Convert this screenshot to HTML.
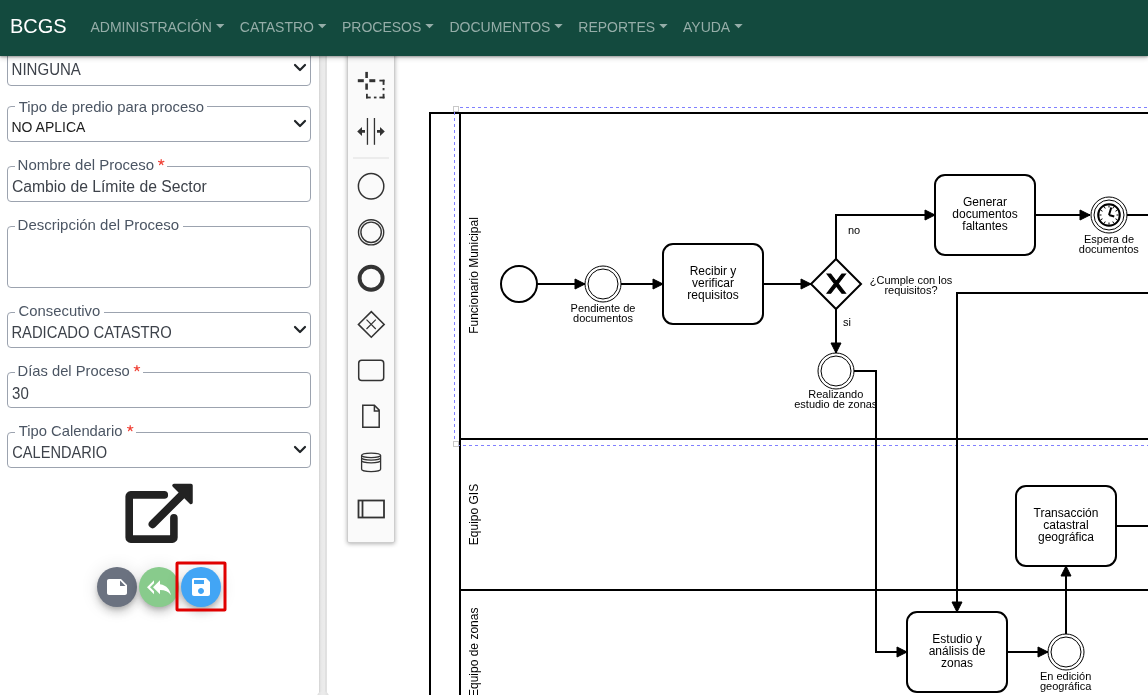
<!DOCTYPE html>
<html><head><meta charset="utf-8">
<style>
html,body{margin:0;padding:0}
body{width:1148px;height:695px;overflow:hidden;position:relative;background:#fff;font-family:"Liberation Sans",sans-serif}
.abs{position:absolute}
#nav{left:0;top:0;width:1148px;height:56px;background:#134a3e;box-shadow:0 1px 2px rgba(0,0,0,.3),0 2px 5px rgba(0,0,0,.2);z-index:10}
#splitter{left:319px;top:56px;width:8px;height:639px;background:linear-gradient(to right,#d2d2d2 0,#e3e3e3 1.5px,#eaeaea 3px,#ebebeb 5.5px,#dadada 7px,#e8e8e8 8px)}
#splitfoot{left:317px;top:691px;width:12px;height:10px;border-radius:6px 6px 0 0;background:linear-gradient(to right,#dcdcdc,#ebebeb 40%,#ebebeb 60%,#dcdcdc)}
#palette{left:347px;top:30px;width:48px;height:513px;background:#fafafa;border:1px solid #cdcdcd;border-radius:2px;box-sizing:border-box;box-shadow:0 1px 4px rgba(0,0,0,.3)}
.fld{position:absolute;left:7px;width:304px;height:36px;border:1px solid #9ca3af;border-radius:4px;box-sizing:border-box}
.lbl{position:absolute;left:15px;height:14px;background:#fff}
.btn{position:absolute;width:40px;height:40px;border-radius:50%;box-shadow:0 3px 5px -1px rgba(0,0,0,.2),0 6px 10px 0 rgba(0,0,0,.14),0 1px 18px 0 rgba(0,0,0,.12)}
svg{position:absolute;left:0;top:0;will-change:transform}
</style></head>
<body>
<!-- left form -->
<div class="fld" style="top:50px"></div>
<div class="fld" style="top:106px"></div>
<div class="fld" style="top:166px"></div>
<div class="fld" style="top:226px;height:62px"></div>
<div class="fld" style="top:312px"></div>
<div class="fld" style="top:372px"></div>
<div class="fld" style="top:432px"></div>
<div class="lbl" style="top:99px;width:192px"></div>
<div class="lbl" style="top:159px;width:152px"></div>
<div class="lbl" style="top:219px;width:168px"></div>
<div class="lbl" style="top:305px;width:89px"></div>
<div class="lbl" style="top:365px;width:128px"></div>
<div class="lbl" style="top:425px;width:121px"></div>

<div id="splitter" class="abs"></div><div id="splitfoot" class="abs"></div>
<svg width="1148" height="695" viewBox="0 0 1148 695" font-family="Liberation Sans, sans-serif">
 <defs>
  <marker id="arr" viewBox="0 0 20 20" refX="11" refY="10" markerWidth="10" markerHeight="10" orient="auto">
   <path d="M 1 5 L 11 10 L 1 15 Z" fill="#000" stroke="#000" stroke-width="1"/>
  </marker>
 </defs>
 <!-- pool & lanes -->
 <g fill="none" stroke="#000" stroke-width="2">
  <path d="M430 760 V113 H1160"/>
  <path d="M460 113 V760"/>
  <path d="M460 439 H1160"/>
  <path d="M460 590 H1160"/>
 </g>
 <g font-size="12" fill="#000">
  <text transform="translate(478 275.5) rotate(-90)" text-anchor="middle">Funcionario Municipal</text>
  <text transform="translate(478 514.5) rotate(-90)" text-anchor="middle">Equipo GIS</text>
  <text transform="translate(478 652.3) rotate(-90)" text-anchor="middle">Equipo de zonas</text>
 </g>
 <!-- selection outline -->
 <g fill="none" stroke="#8080ff" stroke-width="1" stroke-dasharray="3 3">
  <path d="M454.5 107.5 V441" stroke-dashoffset="1.5"/>
  <path d="M454.5 107.5 H1160" stroke-dashoffset="0.5"/>
  <path d="M454.5 445.5 H1160" stroke-dashoffset="3.5"/>
 </g>
 <g fill="#fff" stroke="#c8c8c8" stroke-width="1">
  <rect x="453.5" y="106.5" width="5" height="5"/>
  <rect x="453.5" y="441.5" width="5" height="5"/>
 </g>
 <!-- flows -->
 <g fill="none" stroke="#000" stroke-width="2" marker-end="url(#arr)">
  <path d="M537 284 H585"/>
  <path d="M621 284 H663"/>
  <path d="M763 284 H811"/>
  <path d="M836 259 V215 H935"/>
  <path d="M836 309 V353"/>
  <path d="M1035 215 H1090"/>
  <path d="M854 371 H876 V652 H907"/>
  <path d="M1160 293 H957 V612"/>
  <path d="M1007 652 H1048"/>
  <path d="M1066 634 V566"/>
 </g>
 <g fill="none" stroke="#000" stroke-width="2">
  <path d="M1126 215 H1160"/>
  <path d="M1116 526 H1160"/>
 </g>
 <!-- events -->
 <g fill="#fff" stroke="#000">
  <circle cx="519" cy="284" r="18" stroke-width="2"/>
  <circle cx="603" cy="284" r="18" stroke-width="1"/>
  <circle cx="603" cy="284" r="15" stroke-width="1"/>
  <circle cx="836" cy="371" r="18" stroke-width="1"/>
  <circle cx="836" cy="371" r="15" stroke-width="1"/>
  <circle cx="1066" cy="652" r="18" stroke-width="1"/>
  <circle cx="1066" cy="652" r="15" stroke-width="1"/>
  <circle cx="1109" cy="215" r="18" stroke-width="1"/>
  <circle cx="1109" cy="215" r="15" stroke-width="1"/>
  <circle cx="1109" cy="215" r="10.8" stroke-width="2"/>
 </g>
 <g stroke="#000" fill="none">
  <path d="M1109.00 222.50 L1109.00 224.75 M1105.25 221.50 L1104.12 223.44 M1102.50 218.75 L1100.56 219.88 M1101.50 215.00 L1099.25 215.00 M1102.50 211.25 L1100.56 210.12 M1105.25 208.50 L1104.12 206.56 M1109.00 207.50 L1109.00 205.25 M1112.75 208.50 L1113.88 206.56 M1115.50 211.25 L1117.44 210.12 M1116.50 215.00 L1118.75 215.00 M1115.50 218.75 L1117.44 219.88 M1112.75 221.50 L1113.88 223.44 " stroke-width="1"/>
  <path d="M1109 215 l2.25 -7.5 m-2.25 7.5 l5.25 1.5" stroke-width="2"/>
 </g>
 <!-- gateway -->
 <path d="M836 259 L861 284 L836 309 L811 284 Z" fill="#fff" stroke="#000" stroke-width="2"/>
 <path d="m 827,274 7.42857142,9.14285714 -7.42857142,9.14285714 3.71428571,0 5.57142856,-6.85714284 5.57142856,6.85714284 3.71428571,0 -7.42857142,-9.14285714 7.42857142,-9.14285714 -3.71428571,0 -5.57142856,6.85714284 -5.57142856,-6.85714284 z" fill="#000" stroke="#000" stroke-width="1" transform="translate(0 274) scale(1 1.055) translate(0 -274)"/>
 <!-- tasks -->
 <g fill="#fff" stroke="#000" stroke-width="2">
  <rect x="663" y="244" width="100" height="80" rx="10"/>
  <rect x="935" y="175" width="100" height="80" rx="10"/>
  <rect x="1016" y="486" width="100" height="80" rx="10"/>
  <rect x="907" y="612" width="100" height="80" rx="10"/>
 </g>
 <g font-size="12" fill="#000" text-anchor="middle">
  <text x="713" y="274.8">Recibir y</text>
  <text x="713" y="286.7">verificar</text>
  <text x="713" y="298.7">requisitos</text>
  <text x="985" y="205.7">Generar</text>
  <text x="985" y="217.6">documentos</text>
  <text x="985" y="229.5">faltantes</text>
  <text x="1066" y="516.7">Transacción</text>
  <text x="1066" y="528.6">catastral</text>
  <text x="1066" y="541.4">geográfica</text>
  <text x="957" y="643.3">Estudio y</text>
  <text x="957" y="654.8">análisis de</text>
  <text x="957" y="666.9">zonas</text>
 </g>
 <g font-size="11" fill="#000" text-anchor="middle">
  <text x="603" y="311.6">Pendiente de</text>
  <text x="603" y="321.7">documentos</text>
  <text x="1109" y="242.5">Espera de</text>
  <text x="1108.8" y="253.1">documentos</text>
  <text x="835.8" y="397.6">Realizando</text>
  <text x="835.8" y="407.7">estudio de zonas</text>
  <text x="1065.6" y="680.2">En edición</text>
  <text x="1065.6" y="690.3">geográfica</text>
  <text x="911" y="284">¿Cumple con los</text>
  <text x="911" y="294.1">requisitos?</text>
  <text x="854" y="234.1">no</text>
  <text x="847" y="325.9">si</text>
 </g>
</svg>
<div id="palette" class="abs"></div>
<svg width="1148" height="695" viewBox="0 0 1148 695">
 <g fill="#333">
  <rect x="365.3" y="71.9" width="2.6" height="6.1"/>
  <rect x="365.3" y="83.5" width="2.6" height="6.2"/>
  <rect x="357.8" y="79.2" width="6" height="3"/>
  <rect x="369.3" y="79.2" width="6" height="3"/>
 </g>
 <g fill="#333">
  <rect x="379.4" y="79.7" width="5.1" height="1.8"/>
  <rect x="382.6" y="79.7" width="1.9" height="5.2"/>
  <rect x="382.6" y="88" width="1.9" height="2.3"/>
  <rect x="382.6" y="93.8" width="1.9" height="4.6"/>
  <rect x="379.4" y="96.6" width="5.1" height="1.8"/>
  <rect x="373.9" y="96.6" width="2.6" height="1.8"/>
  <rect x="366" y="96.6" width="4.7" height="1.8"/>
  <rect x="366" y="93.8" width="1.8" height="4.6"/>
 </g>
 <g fill="#333">
  <rect x="366.8" y="118" width="1.3" height="26.8"/>
  <rect x="373.8" y="118" width="1.3" height="26.8"/>
  <path d="M357.2 131.4 L362 127 V130 H365 V132.8 H362 V135.9 Z"/>
  <path d="M384.8 131.4 L380 127 V130 H377 V132.8 H380 V135.9 Z"/>
 </g>
 <rect x="353" y="157.5" width="36" height="1" fill="#ddd"/>
 <g fill="none" stroke="#333">
  <circle cx="371.1" cy="186.3" r="12.7" stroke-width="1.5"/>
  <circle cx="371.1" cy="232.3" r="12.6" stroke-width="1.4"/>
  <circle cx="371.1" cy="232.3" r="10.2" stroke-width="1.4"/>
  <circle cx="371.1" cy="278.3" r="11.5" stroke-width="3.9"/>
  <path d="M371.3 311.6 L384.2 324.4 L371.3 337.3 L358.4 324.4 Z" stroke-width="1.5"/>
  <path d="M366.5 319.7 L375.8 329 M375.8 319.7 L366.5 329" stroke-width="1.2"/>
  <rect x="358.7" y="360.2" width="25" height="20.3" rx="3" stroke-width="1.5"/>
  <path d="M362.8 405.3 H374.4 L379.2 410.1 V427.2 H362.8 Z M374.4 405.3 V410.9 H379.2" stroke-width="1.5"/>
  <path d="M361.6 455.35 a9.5 2.3 0 0 1 19 0 a9.5 2.3 0 0 1 -19 0 V469.3 a9.5 2.3 0 0 0 19 0 V455.35 M361.6 457.8 a9.5 2.3 0 0 0 19 0 M361.6 460.5 a9.5 2.3 0 0 0 19 0" stroke-width="1.3"/>
  <rect x="358.5" y="500.5" width="25.5" height="17" stroke-width="1.8"/>
  <path d="M362.5 500.5 V517.5" stroke-width="1.8"/>
 </g>
</svg>


<div class="btn" style="left:97px;top:567px;background:#6b7280"></div>
<div class="btn" style="left:138.6px;top:567px;background:#88cb8c"></div>
<div class="btn" style="left:181px;top:567px;background:#42a5f5"></div>

<svg width="1148" height="695" viewBox="0 0 1148 695" font-family="Liberation Sans, sans-serif">
 <!-- form texts -->
 <g font-size="15" fill="#4b5563" lengthAdjust="spacingAndGlyphs">
  <text x="18.7" y="111.7" textLength="185.3" lengthAdjust="spacingAndGlyphs">Tipo de predio para proceso</text>
  <text x="17.6" y="170" textLength="136.6" lengthAdjust="spacingAndGlyphs">Nombre del Proceso</text>
  <text x="17.6" y="229.7" textLength="161.6" lengthAdjust="spacingAndGlyphs">Descripción del Proceso</text>
  <text x="18.6" y="315.7" textLength="81.7" lengthAdjust="spacingAndGlyphs">Consecutivo</text>
  <text x="17.6" y="375.7" textLength="112.2" lengthAdjust="spacingAndGlyphs">Días del Proceso</text>
  <text x="18.7" y="435.7" textLength="103.8" lengthAdjust="spacingAndGlyphs">Tipo Calendario</text>
 </g>
 <path fill="none" stroke="#f0453a" stroke-width="1.25" stroke-linecap="round" d="M161.20 162.30 L161.20 159.50 M161.20 162.30 L163.86 161.43 M161.20 162.30 L162.85 164.57 M161.20 162.30 L159.55 164.57 M161.20 162.30 L158.54 161.43 M136.90 368.40 L136.90 365.60 M136.90 368.40 L139.56 367.53 M136.90 368.40 L138.55 370.67 M136.90 368.40 L135.25 370.67 M136.90 368.40 L134.24 367.53 M130.20 428.40 L130.20 425.60 M130.20 428.40 L132.86 427.53 M130.20 428.40 L131.85 430.67 M130.20 428.40 L128.55 430.67 M130.20 428.40 L127.54 427.53 "/>
 <g font-size="16" fill="#3d424a">
  <text x="11.6" y="75" textLength="69.3" lengthAdjust="spacingAndGlyphs">NINGUNA</text>
  <text x="11.5" y="131.7" font-size="14" fill="#1d1d1d">NO APLICA</text>
  <text x="11.9" y="191.9" textLength="194.8" lengthAdjust="spacingAndGlyphs">Cambio de Límite de Sector</text>
  <text x="11.4" y="337.8" textLength="160.4" lengthAdjust="spacingAndGlyphs">RADICADO CATASTRO</text>
  <text x="12.1" y="398.6" textLength="16.7" lengthAdjust="spacingAndGlyphs">30</text>
  <text x="12.3" y="457.6" textLength="94.9" lengthAdjust="spacingAndGlyphs">CALENDARIO</text>
 </g>
 <g fill="none" stroke="#212529" stroke-width="2.2" stroke-linecap="round" stroke-linejoin="round">
  <path d="M295 65 L300 70 L305 65"/>
  <path d="M295 121 L300 126 L305 121"/>
  <path d="M295 327 L300 332 L305 327"/>
  <path d="M295 447 L300 452 L305 447"/>
 </g>
 <!-- external link icon -->
 <g fill="none" stroke="#222" stroke-width="7.6" stroke-linecap="round" stroke-linejoin="round">
  <path d="M164.3 494.9 H130.7 a1.5 1.5 0 0 0 -1.5 1.5 V537.6 a1.5 1.5 0 0 0 1.5 1.5 H172.4 a1.5 1.5 0 0 0 1.5 -1.5 V517.9"/>
  <path d="M152.6 524.2 L182.5 494.3" stroke-width="8"/>
 </g>
 <path d="M174 485.4 L191 485.4 L191 502.4 Z" fill="#222" stroke="#222" stroke-width="3.5" stroke-linejoin="round"/>
 <!-- button icons -->
 <path transform="translate(105 575)" fill="#fff" d="M22 10l-6-6H4c-1.1 0-2 .9-2 2v12.01c0 1.1.9 1.99 2 1.99l16-.01c1.1 0 2-.89 2-1.99v-8zm-7-4.5l5.5 5.5H15V5.5z"/>
 <path transform="translate(147 575.2)" fill="#fff" d="M7 8V5l-7 7 7 7v-3l-4-4 4-4zm6 1V5l-7 7 7 7v-4.1c5 0 8.5 1.6 11 5.1-1-5-4-10-11-11z"/>
 <path transform="translate(189 575)" fill="#fff" d="M17 3H5c-1.11 0-2 .9-2 2v14c0 1.1.89 2 2 2h14c1.1 0 2-.9 2-2V7l-4-4zm-5 16c-1.66 0-3-1.34-3-3s1.34-3 3-3 3 1.34 3 3-1.34 3-3 3zm3-10H5V5h10v4z"/>
 <rect x="177" y="563" width="48" height="46.9" rx="0.5" fill="none" stroke="#e00000" stroke-width="3"/>
</svg>

<div id="nav" class="abs"></div>
<svg width="1148" height="56" viewBox="0 0 1148 56" style="z-index:11" font-family="Liberation Sans, sans-serif">
 <text x="10" y="32.8" font-size="20" fill="#fff">BCGS</text>
 <g font-size="14" fill="#95ada8">
  <text x="90.5" y="32">ADMINISTRACIÓN</text>
  <text x="239.8" y="32">CATASTRO</text>
  <text x="342" y="32">PROCESOS</text>
  <text x="449.5" y="32">DOCUMENTOS</text>
  <text x="578.3" y="32">REPORTES</text>
  <text x="683" y="32">AYUDA</text>
  <path d="M216 24h8.4l-4.2 4.2z M318 24h8.4l-4.2 4.2z M425.3 24h8.4l-4.2 4.2z M554.3 24h8.4l-4.2 4.2z M659.2 24h8.4l-4.2 4.2z M734.3 24h8.4l-4.2 4.2z"/>
 </g>
</svg>
</body></html>
